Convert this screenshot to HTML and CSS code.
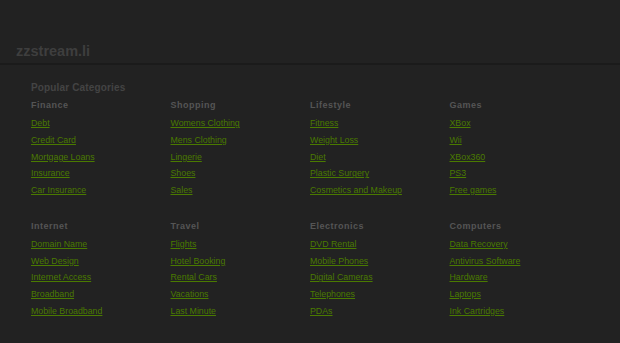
FILE: index.html
```html
<!DOCTYPE html>
<html lang="en">
<head>
    <meta charset="UTF-8">
    <meta name="viewport" content="width=device-width, initial-scale=1.0">
    <title>zzstream.li</title>
    <link rel="stylesheet" href="styles.css">
</head>
<body>
    <section id="header">
        <div class="site-name">zzstream.li</div>
    </section>
    <section id="categories">
        <div class="title">Popular Categories</div>
        <div class="grid">
            <div class="group">
                <div class="heading">Finance</div>
                <a href="#">Debt</a>
                <a href="#">Credit Card</a>
                <a href="#">Mortgage Loans</a>
                <a href="#">Insurance</a>
                <a href="#">Car Insurance</a>
            </div>
            <div class="group">
                <div class="heading">Shopping</div>
                <a href="#">Womens Clothing</a>
                <a href="#">Mens Clothing</a>
                <a href="#">Lingerie</a>
                <a href="#">Shoes</a>
                <a href="#">Sales</a>
            </div>
            <div class="group">
                <div class="heading">Lifestyle</div>
                <a href="#">Fitness</a>
                <a href="#">Weight Loss</a>
                <a href="#">Diet</a>
                <a href="#">Plastic Surgery</a>
                <a href="#">Cosmetics and Makeup</a>
            </div>
            <div class="group">
                <div class="heading">Games</div>
                <a href="#">XBox</a>
                <a href="#">Wii</a>
                <a href="#">XBox360</a>
                <a href="#">PS3</a>
                <a href="#">Free games</a>
            </div>
            <div class="group">
                <div class="heading">Internet</div>
                <a href="#">Domain Name</a>
                <a href="#">Web Design</a>
                <a href="#">Internet Access</a>
                <a href="#">Broadband</a>
                <a href="#">Mobile Broadband</a>
            </div>
            <div class="group">
                <div class="heading">Travel</div>
                <a href="#">Flights</a>
                <a href="#">Hotel Booking</a>
                <a href="#">Rental Cars</a>
                <a href="#">Vacations</a>
                <a href="#">Last Minute</a>
            </div>
            <div class="group">
                <div class="heading">Electronics</div>
                <a href="#">DVD Rental</a>
                <a href="#">Mobile Phones</a>
                <a href="#">Digital Cameras</a>
                <a href="#">Telephones</a>
                <a href="#">PDAs</a>
            </div>
            <div class="group">
                <div class="heading">Computers</div>
                <a href="#">Data Recovery</a>
                <a href="#">Antivirus Software</a>
                <a href="#">Hardware</a>
                <a href="#">Laptops</a>
                <a href="#">Ink Cartridges</a>
            </div>
        </div>
    </section>
</body>
</html>
```
FILE: styles.css
```css
*{
    margin:0;padding:0;box-sizing:border-box;font-family:"Liberation Sans",Arial,sans-serif;
}
body{
    background-color:#222;
}
#header{
    height:65px;
    padding:42px 16px 0;
    border-bottom:2px solid #1b1b1b;
}
.site-name{
    font-size:14.5px;
    font-weight:bold;
    color:#3e3e3e;
    line-height:18px;
}
#categories{
    padding:17px 31px 0;
}
.title{
    font-size:10px;
    font-weight:bold;
    color:#444;
    line-height:12px;
    letter-spacing:0.15px;
}
.grid{
    display:grid;
    grid-template-columns:repeat(4,139.5px);
    row-gap:21px;
    margin-top:5px;
}
.group{
    display:flex;
    flex-direction:column;
    align-items:flex-start;
}
.heading{
    font-size:9px;
    font-weight:bold;
    color:#555;
    line-height:12px;
    letter-spacing:0.5px;
    margin-bottom:4px;
}
.group a{
    font-size:8.8px;
    color:#4a7a00;
    line-height:16.75px;
}
```
